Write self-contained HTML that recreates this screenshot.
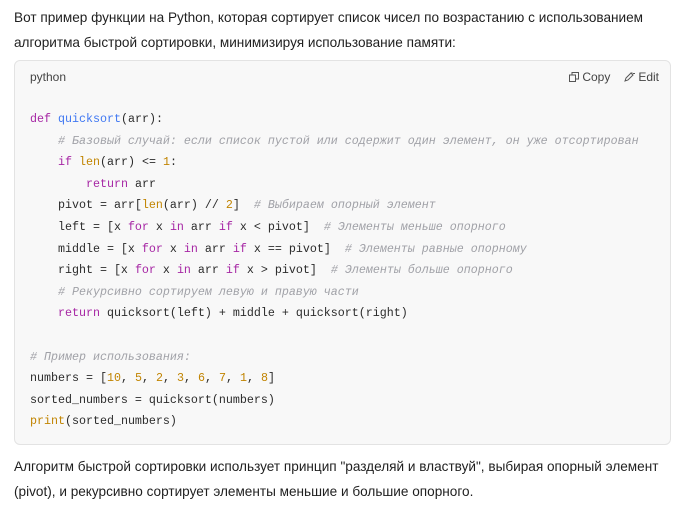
<!DOCTYPE html>
<html><head><meta charset="utf-8"><style>
body{margin:0;background:#fff;width:678px;height:507px;overflow:hidden;font-family:"Liberation Sans",sans-serif;color:#1f1f1f}
.p{position:absolute;left:14px;font-size:13.6px;line-height:25px;white-space:nowrap}
.box{position:absolute;left:14px;top:60px;width:657px;height:385px;background:#f8f8f8;border:1px solid #e3e3e3;border-radius:6px;box-sizing:border-box}
.lang{position:absolute;left:15px;top:9px;font-size:12px;color:#444}
.act{position:absolute;top:9px;font-size:12px;color:#444}
pre{position:absolute;left:15px;top:48px;margin:0;font-family:"Liberation Mono",monospace;font-size:11.67px;line-height:21.6px;color:#2b2b2b}
.k{color:#a626a4}.f{color:#4078f2}.b{color:#c18401}.c{color:#a0a1a7;font-style:italic}.n{color:#c18401}
</style></head><body>
<div class="p" style="top:5px">Вот пример функции на Python, которая сортирует список чисел по возрастанию с использованием</div>
<div class="p" style="top:30px">алгоритма быстрой сортировки, минимизируя использование памяти:</div>
<div class="box">
<div class="lang">python</div>
<div class="act" style="left:554px"><svg width="10" height="10" viewBox="0 0 10 10" style="vertical-align:-1px"><rect x="0.5" y="3" width="6" height="6.5" fill="none" stroke="#555"/><path d="M3 3V0.5h6.5V7H6.5" fill="none" stroke="#555"/></svg> Copy</div>
<div class="act" style="left:609px"><svg width="11" height="10" viewBox="0 0 11 10" style="vertical-align:-1px"><path d="M1 9l1-3 5-5 2 2-5 5z M8 0.5v2M9 1.5h2" fill="none" stroke="#555"/></svg> Edit</div>
<pre><span class="k">def</span> <span class="f">quicksort</span>(arr):
    <span class="c"># Базовый случай: если список пустой или содержит один элемент, он уже отсортирован</span>
    <span class="k">if</span> <span class="b">len</span>(arr) &lt;= <span class="n">1</span>:
        <span class="k">return</span> arr
    pivot = arr[<span class="b">len</span>(arr) // <span class="n">2</span>]  <span class="c"># Выбираем опорный элемент</span>
    left = [x <span class="k">for</span> x <span class="k">in</span> arr <span class="k">if</span> x &lt; pivot]  <span class="c"># Элементы меньше опорного</span>
    middle = [x <span class="k">for</span> x <span class="k">in</span> arr <span class="k">if</span> x == pivot]  <span class="c"># Элементы равные опорному</span>
    right = [x <span class="k">for</span> x <span class="k">in</span> arr <span class="k">if</span> x &gt; pivot]  <span class="c"># Элементы больше опорного</span>
    <span class="c"># Рекурсивно сортируем левую и правую части</span>
    <span class="k">return</span> quicksort(left) + middle + quicksort(right)

<span class="c"># Пример использования:</span>
numbers = [<span class="n">10</span>, <span class="n">5</span>, <span class="n">2</span>, <span class="n">3</span>, <span class="n">6</span>, <span class="n">7</span>, <span class="n">1</span>, <span class="n">8</span>]
sorted_numbers = quicksort(numbers)
<span class="b">print</span>(sorted_numbers)</pre>
</div>
<div class="p" style="top:454px">Алгоритм быстрой сортировки использует принцип "разделяй и властвуй", выбирая опорный элемент</div>
<div class="p" style="top:479px">(pivot), и рекурсивно сортирует элементы меньшие и большие опорного.</div>
</body></html>
